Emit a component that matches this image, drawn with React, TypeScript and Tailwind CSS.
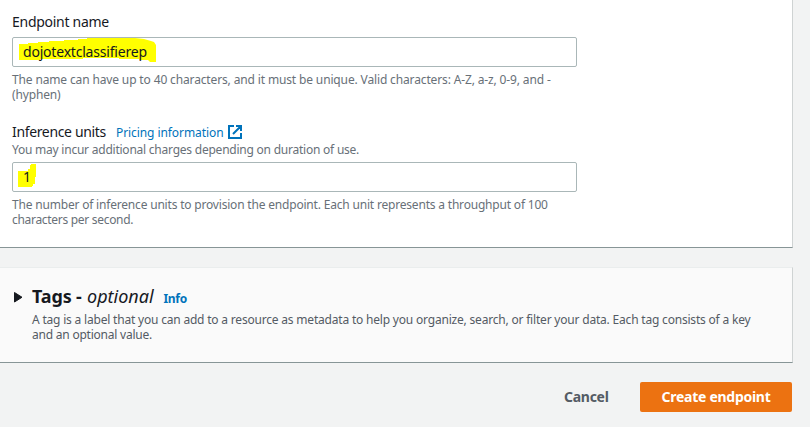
import React from "react";

function Line({ children, className }: { children: React.ReactNode; className: string }) {
  return (
    <div className="h-[15px]">
      <span className={`inline-block align-top whitespace-nowrap ${className}`}>{children}</span>
    </div>
  );
}

export default function App() {
  return (
    <div className="h-[427px] w-[810px] overflow-hidden bg-[#f2f3f3] font-['Noto_Sans','Open_Sans',sans-serif] text-xs leading-[15px] text-[#687078]">
      <section className="h-[248px] w-[793px] border-r border-b border-r-[#cfd3d3] border-b-[#879596] bg-white pt-3 pl-3">
        <div className="h-5 text-sm leading-5 tracking-[-0.28px] text-[#16191f]">Endpoint name</div>
        <div className="relative mt-[5px] h-[30px] w-[565px] rounded-[2px] border border-[#aab7b8] bg-white">
          <svg className="absolute top-0 left-0 overflow-visible" width="150" height="28" viewBox="0 0 150 28">
            <path
              fill="#ffff00"
              d="M6 6h9V5h10V4h11V3h15V2h14V1h9V0h48l9 1 7 2 3 1 2 3v17h-6l-2-2h-9v-1H106v-1H70v1H27v1H6Z"
            />
          </svg>
          <span className="relative ml-[10px] block text-sm leading-[28px] tracking-[-0.2px] text-[#16191f]">
            <span className="inline-block whitespace-nowrap">dojotextclassifierep</span>
          </span>
        </div>
        <div className="mt-[5px]">
          <Line className="tracking-[-0.14px]">
            The name can have up to 40 characters, and it must be unique. Valid characters: A-Z, a-z, 0-9, and -
          </Line>
          <Line className="tracking-[-0.15px]">(hyphen)</Line>
        </div>
        <div className="mt-5 flex h-5 items-start">
          <span className="w-[104px] text-sm leading-5 tracking-[-0.35px] whitespace-nowrap text-[#16191f]">
            Inference units
          </span>
          <span className="w-[112px] text-[12px] leading-[21px] tracking-[-0.08px] whitespace-nowrap text-[#0073bb]">
            Pricing information
          </span>
          <svg className="mt-[2px]" width="15" height="16" viewBox="0 0 15 16" fill="none" stroke="#0073bb" strokeWidth="2">
            <path d="M6 2H1v12h12V9M8 2h5v5M13 2L5 10" />
          </svg>
        </div>
        <Line className="tracking-[-0.23px]">You may incur additional charges depending on duration of use.</Line>
        <div className="relative mt-[5px] h-[30px] w-[565px] rounded-[2px] border border-[#aab7b8] bg-white">
          <svg className="absolute top-0 left-0" width="30" height="28" viewBox="0 0 30 28">
            <path fill="#ffff00" d="M5 8h10V6h2V2h1V1h5v13h-1v7h-2v2h-1v1H5Z" />
          </svg>
          <span className="relative ml-[10px] block text-sm leading-[28px] text-[#16191f]">1</span>
        </div>
        <div className="mt-[5px]">
          <Line className="tracking-[-0.19px]">
            The number of inference units to provision the endpoint. Each unit represents a throughput of 100
          </Line>
          <Line className="tracking-[-0.3px]">characters per second.</Line>
        </div>
      </section>

      <section className="mt-[19px] flex h-24 w-[793px] border border-l-0 border-t-[#eaeded] border-r-[#cfd3d3] border-b-[#879596] bg-[#fafafa] pt-[18px]">
        <svg className="mt-[6px] ml-[14px]" width="9" height="11" viewBox="0 0 9 11">
          <path fill="#16191f" stroke="#16191f" strokeLinejoin="round" d="M.5.5v9.500L8 5.250Z" />
        </svg>
        <div className="-mt-px ml-[9px] text-[#545b64]">
          <div className="flex h-[27px] items-baseline leading-[22px]">
            <span className="w-[55px] text-lg leading-[22px] font-bold tracking-[-0.15px] whitespace-nowrap text-[#16191f]">
              Tags -
            </span>
            <span className="w-[76.500px] text-lg leading-[22px] whitespace-nowrap text-[#16191f] italic">
              optional
            </span>
            <span className="font-bold tracking-[-0.3px] text-[#0073bb]">Info</span>
          </div>
          <Line className="tracking-[-0.195px]">
            A tag is a label that you can add to a resource as metadata to help you organize, search, or filter your data. Each tag consists of a key
          </Line>
          <Line className="tracking-[-0.22px]">and an optional value.</Line>
        </div>
      </section>

      <footer className="mt-[19px] flex h-[30px] w-[792px] justify-end text-sm leading-[30px] font-bold tracking-[-0.27px]">
        <button className="w-[76px] text-left leading-[30px] whitespace-nowrap text-[#545b64]">Cancel</button>
        <button className="w-[152px] rounded-[2px] bg-[#ec7211] text-center leading-[30px] whitespace-nowrap text-white">
          Create endpoint
        </button>
      </footer>
    </div>
  );
}
